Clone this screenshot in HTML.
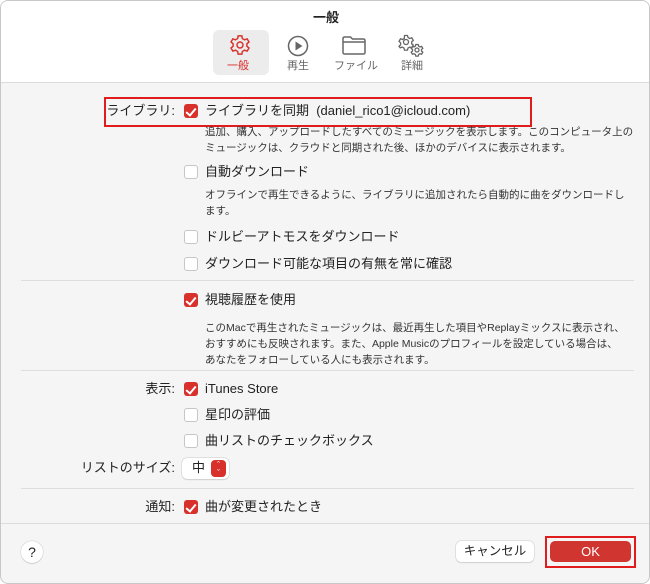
<!DOCTYPE html><html><head><meta charset="utf-8"><style>
*{margin:0;padding:0;box-sizing:border-box}
body{width:650px;height:584px;overflow:hidden;background:#fff;font-family:"Liberation Sans","Noto Sans CJK JP",sans-serif;color:#222;position:relative}
.win{position:absolute;left:0;top:0;width:650px;height:584px;border:1px solid #c8c8c8;border-radius:8px;background:#f5f5f5;overflow:hidden}
.top{position:absolute;left:0;top:0;width:650px;height:82px;background:#fff;border-bottom:1px solid #dcdcdc}
.a{position:absolute;white-space:nowrap}
.t{font-size:13px;line-height:16px}
.d{font-size:10.5px;line-height:16px;color:#333}
.cb{position:absolute;width:14px;height:14px;border-radius:3px;left:183px}
.on{background:#d8302b}
.off{background:#fff;border:1px solid #c6c6c6}
.sep{position:absolute;left:20px;width:613px;height:1px;background:#dedede}
.lbl{position:absolute;right:474px;font-size:13px;line-height:16px;white-space:nowrap}
</style></head><body><div class="win">
<div class="top">
<div class="a" style="left:0;width:650px;text-align:center;top:6px;font-size:13px;font-weight:bold">一般</div>
<div class="a" style="left:212px;top:29px;width:56px;height:45px;background:#ececec;border-radius:6px"></div>
<svg class="a" style="left:228px;top:33px" width="22" height="22" viewBox="0 0 24 24" fill="none" stroke="#d8302b" stroke-width="1.6"><path d="M10 2h4l.6 3 2.3 1.3 2.9-1 2 3.4-2.3 2v2.6l2.3 2-2 3.4-2.9-1L14.6 19l-.6 3h-4l-.6-3-2.3-1.3-2.9 1-2-3.4 2.3-2V10.7L2.2 8.7l2-3.4 2.9 1L9.4 5z"/><circle cx="12" cy="12" r="3.3"/></svg>
<div class="a" style="left:226px;top:56px;font-size:11px;color:#d8302b">一般</div>
<svg class="a" style="left:286px;top:34px" width="22" height="22" viewBox="0 0 22 22"><circle cx="11" cy="11" r="9.5" fill="none" stroke="#666" stroke-width="1.5"/><path d="M8.5 6.5v9l7-4.5z" fill="#666"/></svg>
<div class="a" style="left:286px;top:56px;font-size:11px;color:#666">再生</div>
<svg class="a" style="left:341px;top:35px" width="24" height="19" viewBox="0 0 24 19" fill="none" stroke="#666" stroke-width="1.5"><path d="M1 2.5a1.5 1.5 0 0 1 1.5-1.5h6l2 2h11a1.5 1.5 0 0 1 1.5 1.5v12a1.5 1.5 0 0 1-1.5 1.5h-19A1.5 1.5 0 0 1 1 16.5z M1 6h22"/></svg>
<div class="a" style="left:333px;top:56px;font-size:11px;color:#666">ファイル</div>
<svg class="a" style="left:396px;top:32px" width="28" height="24" viewBox="0 0 28 24" fill="none" stroke="#666" stroke-width="1.3"><circle cx="9" cy="9" r="2.5"/><path d="M7.5 2.5h3l.5 2 1.8 1 2-.7 1.5 2.6-1.6 1.4v2l1.6 1.4-1.5 2.6-2-.7-1.8 1-.5 2h-3l-.5-2-1.8-1-2 .7L2 13.2l1.6-1.4v-2L2 8.4l1.5-2.6 2 .7 1.8-1z"/><circle cx="20" cy="17" r="2"/><path d="M18.8 11.5h2.4l.4 1.6 1.4.8 1.6-.5 1.2 2-1.3 1.1v1.6l1.3 1.1-1.2 2-1.6-.5-1.4.8-.4 1.6h-2.4l-.4-1.6-1.4-.8-1.6.5-1.2-2 1.3-1.1v-1.6l-1.3-1.1 1.2-2 1.6.5 1.4-.8z"/></svg>
<div class="a" style="left:400px;top:56px;font-size:11px;color:#666">詳細</div>
</div>

<div class="a" style="left:103px;top:96px;width:428px;height:30px;border:2px solid #e01c1c"></div>
<div class="lbl" style="top:102px">ライブラリ:</div>
<div class="cb on" style="top:103px"></div>
<div class="a t" style="left:204px;top:102px">ライブラリを同期 &nbsp;(daniel_rico1@icloud.com)</div>
<div class="a d" style="left:204px;top:123px">追加、購入、アップロードしたすべてのミュージックを表示します。このコンピュータ上の<br>ミュージックは、クラウドと同期された後、ほかのデバイスに表示されます。</div>
<div class="cb off" style="top:164px"></div>
<div class="a t" style="left:204px;top:163px">自動ダウンロード</div>
<div class="a d" style="left:204px;top:186px">オフラインで再生できるように、ライブラリに追加されたら自動的に曲をダウンロードし<br>ます。</div>
<div class="cb off" style="top:229px"></div>
<div class="a t" style="left:204px;top:228px">ドルビーアトモスをダウンロード</div>
<div class="cb off" style="top:256px"></div>
<div class="a t" style="left:204px;top:255px">ダウンロード可能な項目の有無を常に確認</div>
<div class="sep" style="top:279px"></div>
<div class="cb on" style="top:292px"></div>
<div class="a t" style="left:204px;top:291px">視聴履歴を使用</div>
<div class="a d" style="left:204px;top:319px">このMacで再生されたミュージックは、最近再生した項目やReplayミックスに表示され、<br>おすすめにも反映されます。また、Apple Musicのプロフィールを設定している場合は、<br>あなたをフォローしている人にも表示されます。</div>
<div class="sep" style="top:369px"></div>
<div class="lbl" style="top:380px">表示:</div>
<div class="cb on" style="top:381px"></div>
<div class="a t" style="left:204px;top:380px">iTunes Store</div>
<div class="cb off" style="top:407px"></div>
<div class="a t" style="left:204px;top:406px">星印の評価</div>
<div class="cb off" style="top:433px"></div>
<div class="a t" style="left:204px;top:432px">曲リストのチェックボックス</div>
<div class="lbl" style="top:459px">リストのサイズ:</div>
<div class="a" style="left:181px;top:457px;width:47px;height:21px;background:#fff;border-radius:5px;box-shadow:0 0 0 .5px #ccc,0 1px 1px rgba(0,0,0,.15)"></div>
<div class="a t" style="left:191px;top:459px">中</div>
<div class="a" style="left:210px;top:459px;width:15px;height:17px;background:#d8302b;border-radius:4px;color:#fff;font-size:9px;line-height:8px;text-align:center;padding-top:1px">ˆ<br>ˇ</div>
<div class="sep" style="top:487px"></div>
<div class="lbl" style="top:498px">通知:</div>
<div class="cb on" style="top:499px"></div>
<div class="a t" style="left:204px;top:498px">曲が変更されたとき</div>
<div class="a" style="left:0;top:522px;width:650px;height:1px;background:#dcdcdc"></div>
<div class="a" style="left:20px;top:540px;width:22px;height:22px;border-radius:50%;background:#fff;box-shadow:0 0 0 .5px #ccc,0 1px 1px rgba(0,0,0,.15);text-align:center;font-size:14px;line-height:22px">?</div>
<div class="a" style="left:455px;top:540px;width:78px;height:21px;background:#fff;border-radius:5px;box-shadow:0 0 0 .5px #ccc,0 1px 1px rgba(0,0,0,.15);text-align:center;font-size:12.5px;line-height:21px">キャンセル</div>
<div class="a" style="left:544px;top:535px;width:91px;height:32px;border:2px solid #e01c1c"></div>
<div class="a" style="left:549px;top:540px;width:81px;height:21px;background:#d03530;border-radius:5px;color:#fff;text-align:center;font-size:13px;line-height:21px">OK</div>
</div>
<svg style="display:none"></svg>
<style>.cb.on::after{content:"";position:absolute;left:4px;top:1.5px;width:4px;height:8px;border:solid #fff;border-width:0 2px 2px 0;transform:rotate(40deg)}</style>
</body></html>
